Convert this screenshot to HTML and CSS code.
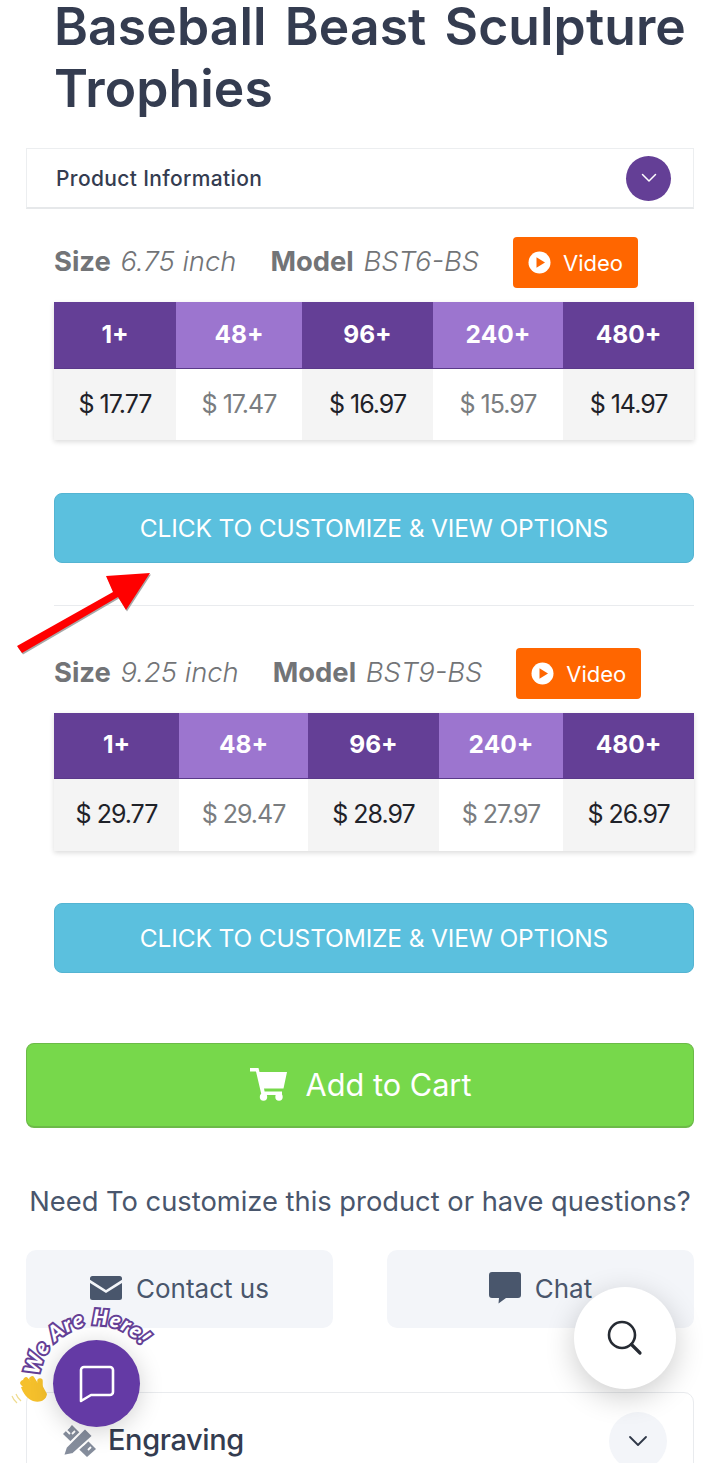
FILE: index.html
```html
<!DOCTYPE html>
<html lang="en">
<head>
<meta charset="utf-8">
<title>Baseball Beast Sculpture Trophies</title>
<link rel="stylesheet" href="styles.css">
</head>
<body>
<main class="page">
  <h1 class="title">Baseball Beast Sculpture Trophies</h1>
  <div class="info-bar">
    <span class="info-label">Product Information</span>
    <span class="info-toggle"><svg width="16" height="10" viewBox="0 0 16 10"><path d="M1.500 1.500 8 8l6.500-6.500" fill="none" stroke="#fff" stroke-width="1.500" stroke-linecap="round" stroke-linejoin="round"/></svg></span>
  </div>

  <section class="product first">
    <div class="spec">
      <span class="spec-item"><b>Size</b> <i>6.75 inch</i></span>
      <span class="spec-item"><b>Model</b> <i>BST6-BS</i></span>
      <a class="video"><svg width="23" height="23" viewBox="0 0 23 23"><circle cx="11.500" cy="11.500" r="11" fill="#fff"/><path d="M8.500 6.200 17 11.500l-8.500 5.300z" fill="#ff6600"/></svg>Video</a>
    </div>
    <div class="prices cols-a">
      <div class="th dark">1+</div><div class="th light">48+</div><div class="th dark">96+</div><div class="th light">240+</div><div class="th dark">480+</div>
      <div class="td grey">$ 17.77</div><div class="td soft">$ 17.47</div><div class="td grey">$ 16.97</div><div class="td soft">$ 15.97</div><div class="td grey">$ 14.97</div>
    </div>
    <a class="customize">CLICK TO CUSTOMIZE &amp; VIEW OPTIONS</a>
  </section>

  <hr class="divider">

  <section class="product second">
    <div class="spec">
      <span class="spec-item"><b>Size</b> <i>9.25 inch</i></span>
      <span class="spec-item"><b>Model</b> <i>BST9-BS</i></span>
      <a class="video"><svg width="23" height="23" viewBox="0 0 23 23"><circle cx="11.500" cy="11.500" r="11" fill="#fff"/><path d="M8.500 6.200 17 11.500l-8.500 5.300z" fill="#ff6600"/></svg>Video</a>
    </div>
    <div class="prices cols-b">
      <div class="th dark">1+</div><div class="th light">48+</div><div class="th dark">96+</div><div class="th light">240+</div><div class="th dark">480+</div>
      <div class="td grey">$ 29.77</div><div class="td soft">$ 29.47</div><div class="td grey">$ 28.97</div><div class="td soft">$ 27.97</div><div class="td grey">$ 26.97</div>
    </div>
    <a class="customize">CLICK TO CUSTOMIZE &amp; VIEW OPTIONS</a>
  </section>

  <a class="cart">
    <svg width="39" height="34" viewBox="0 0 39 34"><path d="M1 1h8.500l1 4H38l-3.500 16.500H15l.6 3H33v3.500H12.500L7 4.500H1z" fill="#fff"/><circle cx="14.500" cy="30" r="3.700" fill="#fff"/><circle cx="30" cy="30" r="3.700" fill="#fff"/></svg>
    Add to Cart
  </a>

  <p class="help">Need To customize this product or have questions?</p>

  <div class="contact">
    <a class="contact-btn"><svg width="32" height="24" viewBox="0 0 32 24"><path d="M2.500 0h27A2.500 2.500 0 0 1 32 2.500v1.300L16 14 0 3.800V2.500A2.500 2.500 0 0 1 2.500 0z" fill="#49566c"/><path d="M0 7l16 10L32 7v14.500a2.500 2.500 0 0 1-2.500 2.500h-27A2.500 2.500 0 0 1 0 21.500z" fill="#49566c"/></svg>Contact us</a>
    <a class="contact-btn"><svg width="32" height="32" viewBox="0 0 32 32"><path d="M3 0h26a3 3 0 0 1 3 3v20a3 3 0 0 1-3 3H17l-7.500 5.500L10 26H3a3 3 0 0 1-3-3V3a3 3 0 0 1 3-3z" fill="#49566c"/></svg>Chat</a>
  </div>

  <div class="accordion">
    <svg class="accordion-icon" width="34" height="34" viewBox="0 0 34 34">
      <path d="M1 11 10 2 34 26 25 34z" fill="#858d9c"/>
      <path d="M8 3 4 7l4 4M13 8l-3 3M18 13l-3 3M24 19l-3 3M29 24l-3 3" fill="none" stroke="#fff" stroke-width="1.800"/>
      <path d="M1 33 4 24 23 5 31 13 11 31z" fill="#858d9c" stroke="#fff" stroke-width="2" stroke-linejoin="round"/>
    </svg>
    <span class="accordion-label">Engraving</span>
    <span class="accordion-toggle"><svg width="20" height="12" viewBox="0 0 20 12"><path d="M2 2l8 8 8-8" fill="none" stroke="#2f3747" stroke-width="1.800" stroke-linecap="round" stroke-linejoin="round"/></svg></span>
  </div>
</main>

<svg class="arrow" width="140" height="86" viewBox="0 0 140 86">
  <path d="M0 74 96 20 89 4 133 1 109 38 101 25 5 81z" fill="#a8a8a8" transform="translate(1 1.500)"/>
  <path d="M0 74 96 20 89 4 133 1 109 38 101 25 5 81z" fill="#f00"/>
</svg>

<a class="search-fab"><svg width="38" height="38" viewBox="0 0 38 38"><circle cx="16" cy="16" r="13" fill="none" stroke="#262b33" stroke-width="2.600"/><path d="M25.500 25.500 34 34" stroke="#262b33" stroke-width="3.200" stroke-linecap="round"/></svg></a>

<div class="chat-widget">
  <svg class="we-are-here" width="170" height="120" viewBox="0 0 170 120">
    <defs><path id="arc" d="M39 76A58 58 0 0 1 150 60"/></defs>
    <text class="arc-text"><textPath href="#arc">We Are Here!</textPath></text>
  </svg>
  <svg class="hand" width="40" height="36" viewBox="0 0 40 36">
    <g stroke="#f5c02c" stroke-width="5.500" stroke-linecap="round" fill="none">
      <path d="M21 20 12 11"/><path d="M23 17 15 8"/><path d="M26 15 21 7"/><path d="M29 18 29 9"/>
    </g>
    <path d="M10 15 30 11 36 22C35 29 28 31 22 29 16 27 12 21 10 15z" fill="#f5c02c"/>
    <path d="M5 22c1 3 3 5 5 7M1 24c1 3 3 5 5 7" stroke="#efdc8f" stroke-width="1.200" fill="none"/>
  </svg>
  <a class="chat-fab"><svg width="38" height="38" viewBox="0 0 38 38"><path d="M6 2h26a3 3 0 0 1 3 3v22a3 3 0 0 1-3 3H13l-10 6V5a3 3 0 0 1 3-3z" fill="none" stroke="#fff" stroke-width="2.600" stroke-linejoin="round"/></svg></a>
</div>
</body>
</html>
```
FILE: styles.css
```css
* { box-sizing: border-box; }
html, body { margin: 0; height: 1463px; overflow: hidden; background: #fff; }
body { position: relative; font-family: Inter, "Noto Sans", sans-serif; color: #343c50; }
a { display: block; }
.page { padding: 0 26px; }
.title { margin: -5px 0 0; padding-left: 28px; font-size: 51.6px; line-height: 62px; font-weight: 600; letter-spacing: .1px; word-spacing: 5px; color: #343c50; }

.info-bar { height: 61px; margin-top: 29px; padding: 0 22px 0 29px; display: flex; align-items: center; justify-content: space-between; border: 1px solid #eceef0; border-bottom: 2px solid #e6e8ea; }
.info-label { font-size: 21px; font-weight: 500; letter-spacing: .35px; color: #343c50; }
.info-toggle { width: 45px; height: 45px; border-radius: 50%; background: #643f96; display: flex; align-items: center; justify-content: center; }

.product { margin-left: 28px; }
.first { margin-top: 28px; }
.second { margin-top: 42px; }
.spec { height: 51px; display: flex; align-items: center; color: #77797c; font-size: 27.4px; }
.spec-item { margin: 0 34px 3px 0; white-space: nowrap; }
.spec-item b { font-weight: 700; color: #727477; }
.spec-item i { font-weight: 300; margin-left: 2px; color: #727477; }
.video { width: 125px; height: 51px; display: flex; align-items: center; justify-content: center; gap: 12px; border-radius: 4px; background: #ff6600; color: #fff; font-size: 22px; }

.prices { display: grid; margin-top: 14px; box-shadow: 0 2px 5px rgba(0, 0, 0, .14); }
.cols-a { grid-template-columns: 122px 126px 131px 130px 131px; grid-template-rows: 67px 71px; }
.cols-b { grid-template-columns: 125px 129px 131px 124px 131px; grid-template-rows: 66px 72px; }
.th { display: flex; align-items: center; justify-content: center; padding-bottom: 2px; color: #fff; font-size: 24.5px; font-weight: 700; }
.cols-b .th { padding-bottom: 3px; }
.dark { background: #643f96; border-bottom: 1px solid #5a388a; }
.light { background: #9c75cf; border-bottom: 1px solid #5a388a; }
.td { display: flex; align-items: center; justify-content: center; padding-bottom: 2px; font-size: 25px; letter-spacing: -1px; }
.grey { background: #f4f4f4; color: #1f2229; }
.soft { background: #fff; color: #7a7d80; }

.customize { height: 70px; margin-top: 53px; display: flex; align-items: center; justify-content: center; border: 1px solid #54b4d2; border-radius: 8px; background: #5bc0de; color: #fff; font-size: 24.5px; letter-spacing: -.15px; }
.second .customize { margin-top: 52px; }
.divider { height: 1px; margin: 42px 0 0 28px; border: 0; background: #e9ebee; }

.cart { height: 85px; margin-top: 70px; padding-bottom: 2px; display: flex; align-items: center; justify-content: center; gap: 18px; border: 1px solid #6cba48; border-bottom-width: 2px; border-radius: 8px; background: #77d84b; color: #fff; font-size: 30.7px; }
.help { margin: 56px 0 0; text-align: center; font-size: 27.3px; line-height: 36px; white-space: nowrap; color: #49566c; }

.contact { display: flex; justify-content: space-between; margin-top: 30px; }
.contact-btn { width: 307px; height: 78px; padding-bottom: 2px; display: flex; align-items: center; justify-content: center; gap: 14px; border-radius: 10px; background: #f3f5f9; color: #49566c; font-size: 26px; }

.accordion { height: 100px; margin-top: 64px; padding: 30px 26px 0 35px; display: flex; align-items: flex-start; border: 1px solid #e9ebee; border-radius: 10px 10px 0 0; }
.accordion-icon { flex: none; }
.accordion-label { margin: -1px 0 0 12px; font-size: 29px; line-height: 36px; font-weight: 500; letter-spacing: -.4px; color: #343c50; }
.accordion-toggle { margin: -11px 0 0 auto; width: 58px; height: 58px; border-radius: 50%; background: #f3f5f9; display: flex; align-items: center; justify-content: center; }

.arrow { position: absolute; left: 17px; top: 572px; }
.search-fab { position: absolute; left: 574px; top: 1287px; width: 102px; height: 102px; border-radius: 50%; background: #fff; box-shadow: 0 8px 30px rgba(0, 0, 0, .2); display: flex; align-items: center; justify-content: center; }

.chat-widget { position: absolute; left: 0; top: 1300px; width: 170px; height: 140px; }
.we-are-here { position: absolute; left: 0; top: 0; }
.arc-text { font-family: Lato, sans-serif; font-size: 21px; font-weight: 900; font-style: italic; letter-spacing: 1.5px; fill: #fff; stroke: #643f96; stroke-width: 4px; paint-order: stroke; }
.hand { position: absolute; left: 11px; top: 72px; }
.chat-fab { position: absolute; left: 53px; top: 40px; width: 87px; height: 87px; border-radius: 50%; background: #643aa5; box-shadow: 0 4px 24px rgba(0, 0, 0, .18); display: flex; align-items: center; justify-content: center; }
```
